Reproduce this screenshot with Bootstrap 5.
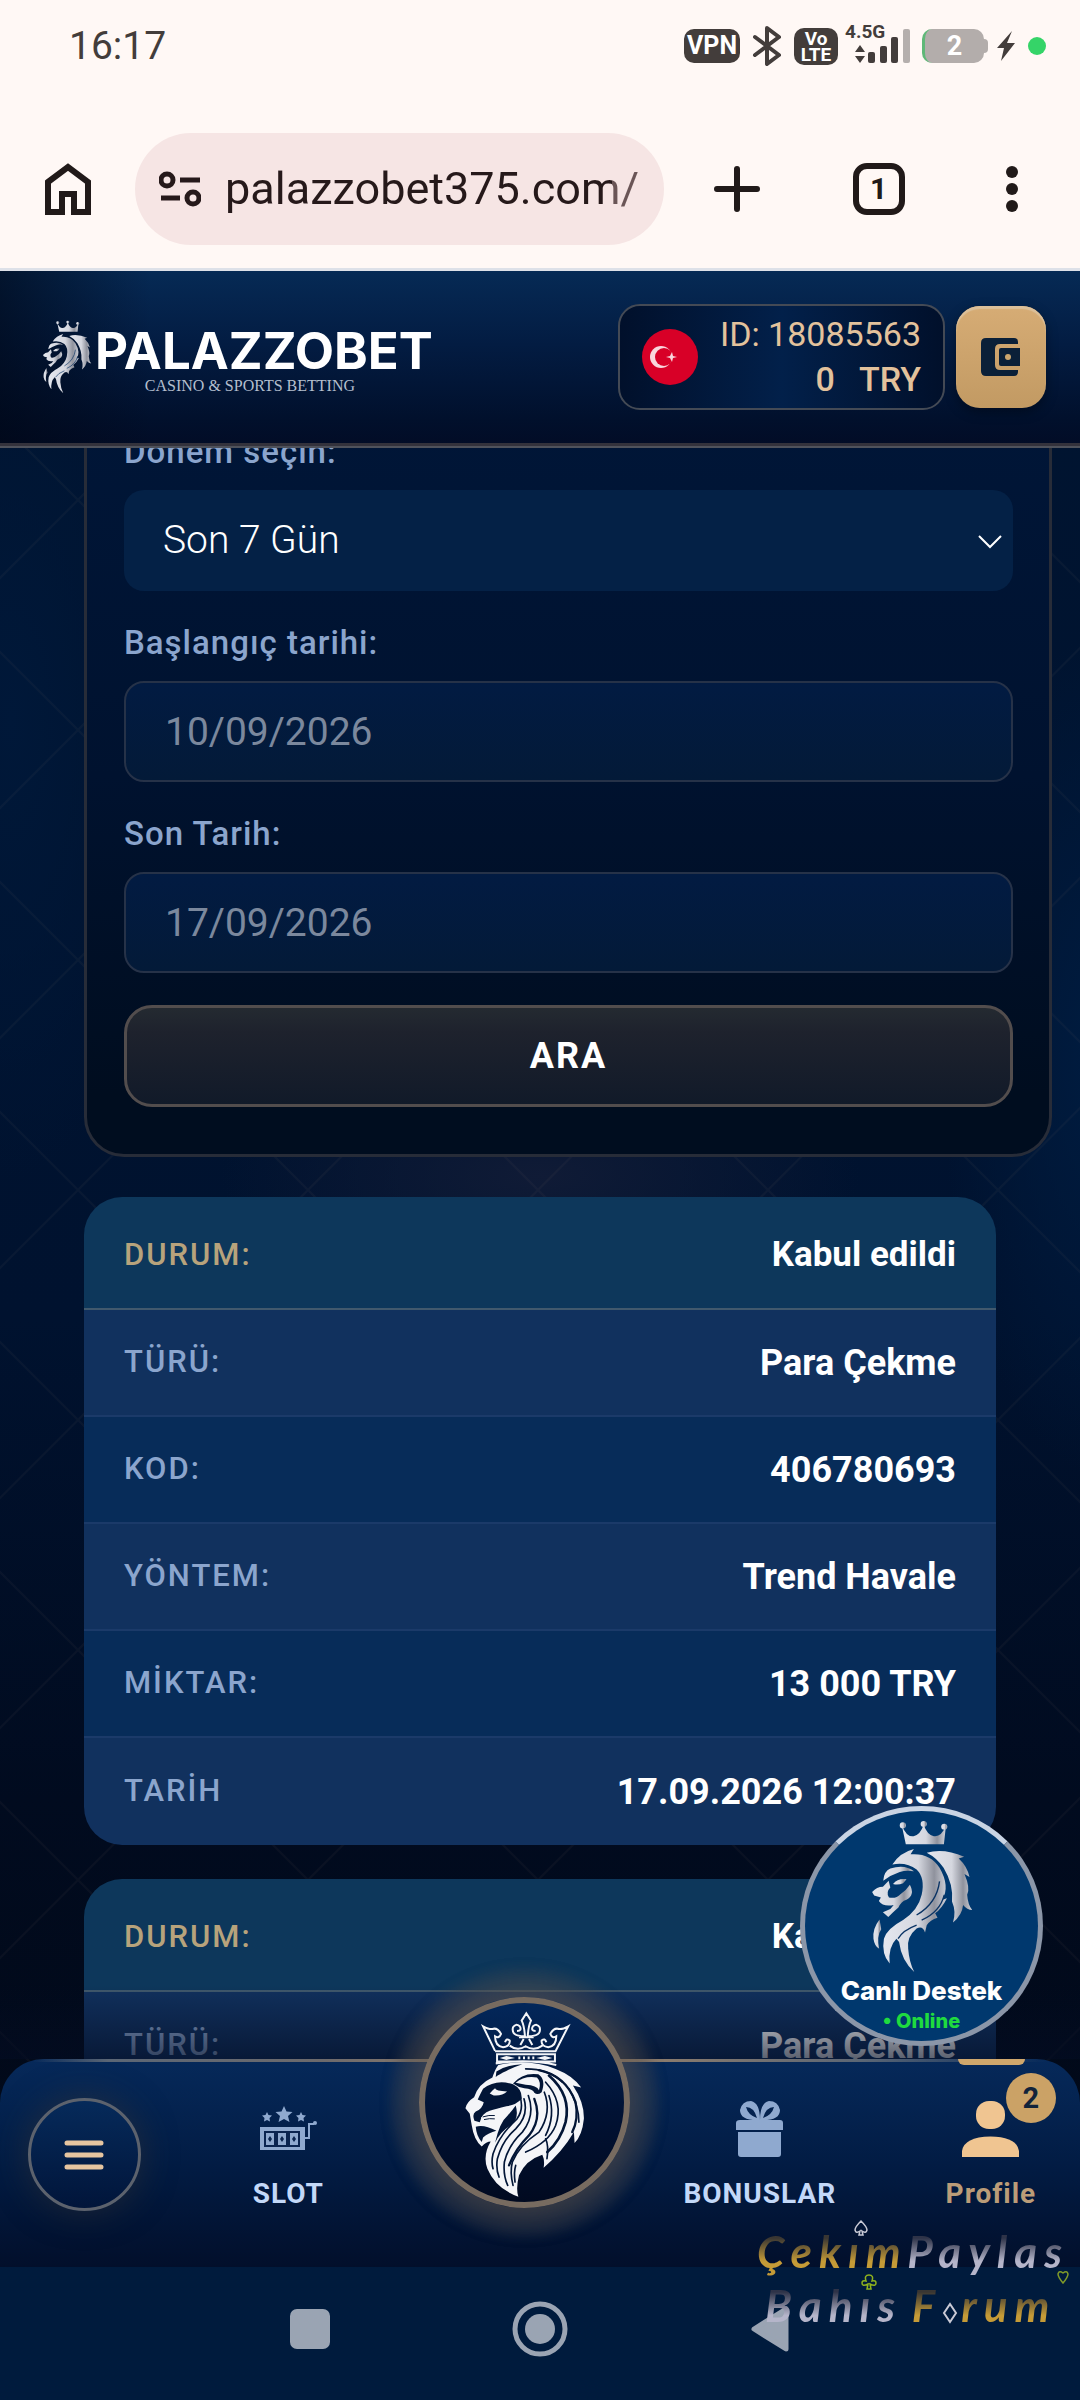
<!DOCTYPE html>
<html lang="tr">
<head>
<meta charset="utf-8">
<meta name="viewport" content="width=device-width, initial-scale=1">
<title>Palazzobet</title>
<link href="https://cdn.jsdelivr.net/npm/bootstrap@5.3.0/dist/css/bootstrap.min.css" rel="stylesheet">
<style>
:root{--gold:#e3c29c;--soft:#8ba5cd;--line:#2a303c}
body{font-family:Roboto,"Noto Sans",sans-serif;background:#000f29;color:#fff}
a{text-decoration:none}
svg{display:block;flex:none}
.app{background:
  url("data:image/svg+xml,%3csvg xmlns='http://www.w3.org/2000/svg' width='230' height='230'%3e%3cpath d='M0 0L230 230M230 0L0 230' stroke='%23807868' stroke-opacity='.07' stroke-width='2'/%3e%3c/svg%3e") 78px 40px,
  radial-gradient(ellipse 320px 120px at 50% 49%,#101b36,transparent),
  radial-gradient(ellipse 160px 420px at 102% 44%,#001c40,transparent),
  radial-gradient(ellipse 160px 460px at 1% 30%,#001839,transparent),
  linear-gradient(#001531,#00122f 55%,#010b1f 75%,#020814)}
/* device status bar */
.status{height:110px;padding:0 34px 18px 69px;background:#fff8f5;color:#433d3b}
.clock{font-size:39px;line-height:40px}
.status-icons{gap:12px}
.chip{background:#433d3b;color:#fff;border-radius:10px;font-weight:700}
.chip-vpn{width:56px;height:34px;font-size:25px;line-height:34px}
.chip-lte{width:44px;height:37px;font-size:19px;line-height:16px;padding-top:3px}
.net{font-size:19px;line-height:19px;font-weight:700;left:-5px;top:-4px}
.signal{width:60px;height:40px}
.battery{width:62px;height:34px;border-radius:10px;background:#b3adab;color:#fff;font-size:27px;line-height:34px;font-weight:700;border-left:3px solid #5fb878}
.battery::after{content:"";position:absolute;right:-4px;top:10px;width:4px;height:14px;border-radius:0 4px 4px 0;background:#b3adab}
.dot{width:18px;height:18px;background:#35d468}
/* browser bar */
.toolbar{padding:23px 61px 23px 45px;background:#fff8f5;border-bottom:3px solid #dee1e8;color:#211a19}
.toolbar button,.bare{background:none;border:0;padding:0;color:inherit}
.pill{background:#f6e5e4;height:112px;padding:0 23px 0 24px;margin-left:44px;margin-right:50px;min-width:0}
.url{font-size:45px;line-height:56px;border:0;padding:0;width:0;outline:0;color:transparent;background:linear-gradient(90deg,#26191a 93%,#6a5556 93%);-webkit-background-clip:text;background-clip:text}
.tools{width:305px}
.toolbar .tabs{width:52px;height:52px;margin-right:8px;border:6px solid #211a19;border-radius:14px;font-size:30px;line-height:40px;font-weight:700}
/* site header */
.site{height:177px;padding:0 34px 4px 42px;background:linear-gradient(90deg,rgba(0,6,20,.6),transparent 14%),linear-gradient(#062a55,#031c42 42%,#01102c 85%,#020c26);border-bottom:2px solid #4f525b;box-shadow:inset 0 -3px #33323c;z-index:3}
.brand{color:#fff;gap:3px}
.brand-text{padding-top:12px;gap:3px}
.brand-name{font-family:Inter,sans-serif;font-weight:700;font-size:51px;line-height:44px}
.brand-sub{font-family:"Liberation Serif",serif;font-size:16px;line-height:20px;color:#b4bfce;margin-right:28px}
.wallet-row{gap:11px}
.account{height:106px;border:2px solid #444a55;border-radius:22px;padding:0 22px;gap:22px;background:linear-gradient(90deg,#01102b,#02204a 50%,#01102b);color:var(--gold);font-size:34px;line-height:45px}
.balance{font-weight:500}
.wallet{width:90px;height:102px;border:0;border-radius:24px;background:linear-gradient(#d6ac75,#c29a63);box-shadow:inset 0 3px 1px #dcc09a,0 4px 12px rgba(0,0,0,.35)}
/* scrolled page */
.page{margin-bottom:-44px;min-height:0}
.filter{margin:-52px 28px 40px 84px;padding:33px 36px 47px 37px;border:3px solid #272c38;border-radius:40px;background:linear-gradient(#001638,#00122f 50%,#000d1f 92%)}
.filter label{font-size:33px;line-height:40px;font-weight:500;letter-spacing:1px;color:var(--soft);margin-bottom:18px}
.field{height:101px;border-radius:20px;margin-bottom:32px;font-size:39px}
.filter .form-select{background-color:#042146;border:0;color:#fff;font-weight:300;padding:0 60px 0 39px;background-position:right 8px center;background-size:30px;
  --bs-form-select-bg-img:url("data:image/svg+xml,%3csvg xmlns='http://www.w3.org/2000/svg' viewBox='0 0 30 30'%3e%3cpath d='M4 10l11 11L26 10' fill='none' stroke='%23fff' stroke-width='2'/%3e%3c/svg%3e")}
.filter .form-control{background:linear-gradient(#021b42,#031a38);border:2px solid #263248;color:#7b889d;padding:0 39px}
.search{height:102px;border:3px solid #524d4d;border-radius:28px;background:linear-gradient(#242a31,#1e222d 25%,#111a29);color:#fff;font-size:36px;font-weight:700;letter-spacing:2px}
.record{margin:0 84px 34px;border-radius:38px;overflow:hidden}
.record th{font-size:31px;font-weight:500;letter-spacing:2px;color:var(--soft);padding:0 0 0 40px}
.record td{font-size:36px;font-weight:700;text-align:right;padding:0 40px 0 0}
.record tr{height:107px;background:#072c59;border-bottom:2px solid #1b3a69}
.record tr:nth-child(even){background:#11315e}
.record tr:last-child{height:108px;border-bottom:0}
.record tr:first-child{height:112px;background:#0d375b;border-bottom-color:#41596d}
.record tr:first-child th{color:#b7a37c;padding-top:6px}
.record tr:first-child td{font-size:35px;padding-top:6px}
/* bottom navigation */
.dock{height:208px;border-radius:44px 44px 0 0;background:linear-gradient(#06295a,#021c44 50%,#020f2b);z-index:4}
.edge{left:0;right:0;top:0;height:3px;background:linear-gradient(90deg,transparent 3%,#5b6675 10%,#6d6a6c 30%,#937f6c 45%,#937f6c 58%,#5b6675 80%,transparent 97%)}
.fade-up{bottom:208px;left:0;right:0;height:74px;background:linear-gradient(transparent,rgba(3,12,34,.65));z-index:-1}
.dock-item{font-size:28px;line-height:34px;font-weight:700;letter-spacing:1px;color:#c3d8f8;gap:20px;padding-top:42px}
.slot-menu{width:15.6%;padding-top:39px}
.slot-a{width:22.2%}
.slot-b{width:26.3%}
.slot-c{width:16.5%}
.dock .active-item{color:#bb9c78}
.menu-btn{width:113px;height:113px;border:3px solid #5c626d;background:linear-gradient(#062a5a,#01153a);box-shadow:0 0 34px rgba(60,55,50,.5)}
.lion-btn{width:211px;height:211px;top:-62px;left:50%;margin-left:-121px;padding-top:4px;border:6px solid #776b60;background:linear-gradient(#03275a,#011234 55%,#010a20);box-shadow:0 0 26px 12px rgba(115,95,75,.4),0 0 12px 28px rgba(60,65,75,.3)}
.marker{width:67px;height:6px;top:0;left:50%;margin-left:-33px;border-radius:0 0 8px 8px;background:#d0a76c}
.count{width:50px;height:50px;left:50%;margin-left:15px;top:14px;background:#cba266;color:#12233a;font-size:29px;line-height:50px;letter-spacing:0}
.chat{width:243px;height:240px;right:37px;bottom:354px;z-index:5;border:5px solid #8b96a8;border-top-color:#c9d4e4;background:#00386e;padding-top:9px;color:#fff;font-family:Inter,sans-serif;font-weight:800}
.chat-name{font-size:26px;line-height:36px}
.chat-state{font-size:20px;line-height:24px;color:#1fdb3f}
/* device navigation */
.keys{height:133px;padding:0 18% 9px;background:#001b3d;z-index:4;color:#9aa4b3}
.keys .bare{color:inherit}
.stamp{left:757px;bottom:68px;z-index:6;font-family:Lato,sans-serif;font-style:italic;font-weight:700;font-size:44px;line-height:54px;pointer-events:none}
.ink{background:linear-gradient(#393633 25%,#c59b37 70%);-webkit-background-clip:text;background-clip:text;color:transparent;letter-spacing:7px}
.silver{background-image:linear-gradient(#2e3348 25%,#b5b5ca 70%)}
.suit{position:absolute;fill:none;stroke-width:1.500}
.suit-spade{left:97px;top:-4px;stroke:#c9cad6}
.suit-heart{left:300px;top:46px;stroke:#7f9a2a}
.suit-club{left:104px;top:50px;stroke:#8fb31e}
.gem{display:inline-block;fill:none;stroke:#c9cad6;stroke-width:2;margin-right:3px;vertical-align:-2px}
</style>
</head>
<body>
<svg width="0" height="0" class="position-absolute" aria-hidden="true">
  <defs>
    <linearGradient id="steel" x1="0" x2="1"><stop offset="0" stop-color="#e4e7ef"/><stop offset=".55" stop-color="#d5d7df"/><stop offset=".8" stop-color="#8f929d"/><stop offset="1" stop-color="#d0d2da"/></linearGradient>
    <symbol id="lion" viewBox="392 248 308 454">
      <g fill="url(#steel)">
        <path d="M498 320L486 264Q501 300 521 296Q541 292 551 262Q561 292 581 296Q602 300 617 266L611 320Z"/>
        <circle cx="489" cy="264" r="9"/><circle cx="551" cy="260" r="9"/><circle cx="612" cy="268" r="9"/>
        <path d="M560 345Q610 330 671 357L655 362Q680 385 687 417L672 408Q690 450 680 470Q682 500 695 515Q680 515 668 500Q665 530 638 552Q648 520 635 490Q640 440 610 390Q590 360 560 345Z"/>
        <path d="M458 380Q480 345 522 334L512 350Q570 345 598 390Q630 445 606 485L620 480Q605 510 585 525L592 538Q570 545 560 560L555 582Q548 560 530 570Q500 595 505 630Q508 670 523 699Q485 665 478 610L470 600Q445 625 450 674Q425 645 433 600Q443 570 490 545Q535 515 545 470Q556 420 530 395Q500 372 458 380Z"/>
        <path d="M431 428Q433 400 452 392Q495 378 522 400Q500 396 480 402Q455 410 431 428Z"/>
        <path d="M460 438Q475 420 500 424L490 436Q475 442 460 438Z"/>
        <path d="M398 462Q412 446 430 446L447 428L452 448Q438 462 448 478Q470 482 482 468Q500 456 510 440Q526 470 500 485Q484 490 476 508Q462 520 446 536L430 522L452 512L462 500Q430 506 418 488L424 478L404 472Z"/>
        <path d="M420 543Q399 570 402 600Q405 622 419 630Q411 592 425 572Z"/>
      </g>
      <path d="M530 530Q590 495 598 430M545 545Q600 520 612 470M475 600Q490 575 530 560" fill="none" stroke="#0a3364" stroke-width="4"/>
    </symbol>
  </defs>
</svg>

<div class="app d-flex flex-column vh-100 overflow-hidden position-relative">

  <div class="status d-flex align-items-center justify-content-between flex-shrink-0">
    <span class="clock">16:17</span>
    <div class="status-icons d-flex align-items-center">
      <span class="chip chip-vpn text-center">VPN</span>
      <svg width="30" height="42" viewBox="0 0 30 42" fill="none" stroke="#433d3b" stroke-width="4" stroke-linejoin="round" stroke-linecap="round"><path d="M3 12L27 30L15 39V3L27 12L3 30"/></svg>
      <span class="chip chip-lte text-center">Vo<br>LTE</span>
      <span class="signal position-relative">
        <span class="net position-absolute">4.5G</span>
        <svg width="60" height="40" viewBox="0 0 60 40" fill="#433d3b"><path d="M5 26l5-7 5 7zM5 30h10l-5 7z"/><rect x="18" y="26" width="7" height="11" rx="2"/><rect x="30" y="20" width="7" height="17" rx="2"/><rect x="41" y="11" width="7" height="26" rx="2"/><rect x="53" y="3" width="7" height="34" rx="2" fill="#b5afad"/></svg>
      </span>
      <span class="battery position-relative text-center">2</span>
      <svg width="20" height="32" viewBox="0 0 20 32" fill="#433d3b"><path d="M16 1L1 18h7L5 31L19 13h-8z"/></svg>
      <span class="dot rounded-circle"></span>
    </div>
  </div>

  <div class="toolbar d-flex align-items-center flex-shrink-0">
    <button type="button" aria-label="Ana sayfa"><svg width="46" height="52" viewBox="0 0 46 52" fill="none" stroke="currentColor" stroke-width="6"><path d="M3 19L23 4L43 19V49H29V31H17V49H3Z"/></svg></button>
    <div class="pill rounded-pill d-flex align-items-center flex-grow-1">
      <svg width="42" height="36" viewBox="0 0 42 36" fill="none" stroke="#26191a" stroke-width="5"><circle cx="8" cy="9" r="6"/><path d="M21 9H41M2 27H21"/><circle cx="34" cy="27" r="6"/></svg>
      <input class="url flex-grow-1 ms-4" type="text" aria-label="Adres" value="palazzobet375.com/a">
    </div>
    <div class="tools d-flex align-items-center justify-content-between flex-shrink-0">
      <button type="button" aria-label="Yeni sekme"><svg width="46" height="46" viewBox="0 0 46 46" stroke="currentColor" stroke-width="6" stroke-linecap="round"><path d="M23 3V43M3 23H43"/></svg></button>
      <button type="button" class="tabs">1</button>
      <button type="button" aria-label="Menü"><svg width="14" height="48" viewBox="0 0 14 48" fill="currentColor"><circle cx="7" cy="7" r="6"/><circle cx="7" cy="24" r="6"/><circle cx="7" cy="41" r="6"/></svg></button>
    </div>
  </div>

  <header class="site d-flex align-items-center justify-content-between position-relative flex-shrink-0">
    <a href="#" class="brand d-flex align-items-center">
      <svg width="50" height="74"><use href="#lion"/></svg>
      <span class="brand-text d-flex flex-column align-items-center"><span class="brand-name">PALAZZOBET</span><span class="brand-sub">CASINO &amp; SPORTS BETTING</span></span>
    </a>
    <div class="wallet-row d-flex align-items-center">
      <div class="account d-flex align-items-center">
        <svg width="56" height="56" viewBox="0 0 56 56"><circle cx="28" cy="28" r="28" fill="#d80027"/><circle cx="19" cy="28" r="11" fill="#f9d5dc"/><circle cx="22" cy="28" r="9" fill="#d80027"/><path d="M24 28l4-1 2-4 1 4 4 1-4 1-1 4-2-4z" fill="#f9d5dc"/></svg>
        <div class="text-end"><div>ID: 18085563</div><div class="balance"><span class="me-4">0</span>TRY</div></div>
      </div>
      <button type="button" class="wallet d-flex align-items-center justify-content-center" aria-label="Cüzdan">
        <svg width="40" height="38" viewBox="0 0 40 38"><path d="M5 0H33Q37 0 37 4V6H19Q14 6 14 11V27Q14 32 19 32H37V34Q37 38 33 38H5Q0 38 0 33V5Q0 0 5 0Z" fill="#0b2038"/><path d="M20 10H39V28H20Q18 28 18 26V12Q18 10 20 10Z" fill="#0b2038"/><circle cx="27" cy="19" r="3" fill="#cba56d"/></svg>
      </button>
    </div>
  </header>

  <main class="page flex-grow-1 overflow-hidden">
    <form class="filter">
      <label class="d-block" for="period">Dönem seçin:</label>
      <select class="form-select field" id="period"><option>Son 7 Gün</option></select>
      <label class="d-block" for="from">Başlangıç tarihi:</label>
      <input class="form-control field" id="from" type="text" value="10/09/2026">
      <label class="d-block" for="to">Son Tarih:</label>
      <input class="form-control field" id="to" type="text" value="17/09/2026">
      <button type="button" class="search w-100 d-block">ARA</button>
    </form>
    <div class="record">
      <table class="w-100">
        <tr><th scope="row">DURUM:</th><td>Kabul edildi</td></tr>
        <tr><th scope="row">TÜRÜ:</th><td>Para Çekme</td></tr>
        <tr><th scope="row">KOD:</th><td>406780693</td></tr>
        <tr><th scope="row">YÖNTEM:</th><td>Trend Havale</td></tr>
        <tr><th scope="row">MİKTAR:</th><td>13 000 TRY</td></tr>
        <tr><th scope="row">TARİH</th><td>17.09.2026 12:00:37</td></tr>
      </table>
    </div>
    <div class="record">
      <table class="w-100">
        <tr><th scope="row">DURUM:</th><td>Kabul edildi</td></tr>
        <tr><th scope="row">TÜRÜ:</th><td>Para Çekme</td></tr>
      </table>
    </div>
  </main>

  <button type="button" class="chat position-absolute rounded-circle d-flex flex-column align-items-center">
    <svg width="104" height="153"><use href="#lion"/></svg>
    <span class="chat-name">Canlı Destek</span>
    <span class="chat-state">• Online</span>
  </button>

  <nav class="dock position-relative d-flex flex-shrink-0">
    <div class="fade-up position-absolute"></div>
    <div class="edge position-absolute"></div>
    <div class="slot-menu d-flex align-items-start justify-content-center">
      <button type="button" class="menu-btn rounded-circle d-flex align-items-center justify-content-center p-0" aria-label="Menü"><svg width="40" height="30" viewBox="0 0 40 30" stroke="#e6c5a0" stroke-width="5" stroke-linecap="round"><path d="M3 3H37M3 15H37M3 27H37"/></svg></button>
    </div>
    <a href="#" class="dock-item slot-a d-flex flex-column align-items-center">
      <svg width="57" height="56" viewBox="0 0 57 56" fill="#8fa9cf"><path d="M24 5l2.500 5.500 6 .5-4.500 4 1.500 6-5.500-3-5.500 3 1.500-6-4.500-4 6-.5zM7 11l1.500 3 3.500.5-2.500 2.500.5 3.500-3-1.500-3 1.500.5-3.500-2.500-2.500 3.500-.5zM41 11l1.500 3 3.500.5-2.500 2.500.5 3.500-3-1.500-3 1.500.5-3.500-2.500-2.500 3.500-.5z"/><path d="M0 26H45V49H0Z"/><path d="M45 37h4v-14h5" fill="none" stroke="#8fa9cf" stroke-width="2"/><circle cx="55" cy="22" r="2"/><g fill="none" stroke="#0a2450" stroke-width="2"><path d="M5 31h10v14H5zM17 31h10v14H17zM29 31h10v14H29z"/></g><path d="M10 35l2 3-2 3-2-3zM22 35l2 3-2 3-2-3zM34 35l2 3-2 3-2-3z" fill="#0a2450"/></svg>
      SLOT
    </a>
    <a href="#" class="lion-btn position-absolute rounded-circle d-flex align-items-center justify-content-center" aria-label="Ana sayfa">
      <svg width="124" height="187" viewBox="242 156 372 562">
        <g fill="none" stroke="#f4f5f8" stroke-width="6">
          <path d="M338 276L302 202Q322 212 330 210Q345 205 356 225Q350 240 338 232Q338 262 362 265Q384 262 382 245Q372 236 368 250M520 276L558 202Q540 212 530 210Q515 205 504 225Q510 240 522 232Q522 262 498 265Q476 262 478 245Q488 236 492 250M382 260Q405 278 430 262Q455 278 480 260"/>
          <path d="M432 163L418 185Q426 200 428 235H436Q438 200 446 185ZM426 232Q385 232 392 205Q400 192 412 202Q420 215 404 216M438 232Q479 232 472 205Q464 192 452 202Q444 215 460 216M410 235H454M424 240L414 258M440 240L450 258"/>
          <path d="M338 277H522M344 286H518V308H344ZM340 314Q430 298 522 318"/>
        </g>
        <path d="M352 297l20-6 26 6-26 6zM462 297l26-6 22 6-22 6zM408 293h6v8h-6zM422 293h6v8h-6zM436 293h6v8h-6zM450 293h6v8h-6z" fill="#f4f5f8"/>
        <path d="M330 356Q338 330 348 318Q440 298 520 330Q572 350 597 386L572 380Q606 430 605 480Q600 530 577 553L575 520Q540 580 484 627Q488 604 480 588Q430 604 410 650Q400 690 408 714Q340 690 315 630Q300 590 325 548Q312 548 298 563Q275 545 268 500L262 465L249 448Q252 430 275 415Q288 375 330 356Z" fill="#f4f5f8"/>
        <g fill="#021536">
          <path d="M302 390Q340 360 392 376Q420 390 418 420Q400 440 372 442Q340 450 322 456Q300 462 292 490L276 486Q268 466 280 458Q300 450 304 430L286 422Q294 405 302 390Z"/>
          <path d="M280 504Q304 496 342 516Q318 522 302 536L298 550Q282 532 280 504Z"/>
          <path d="M392 374Q420 340 468 346Q492 362 478 400Q466 410 456 402Q452 390 426 388Q408 386 392 374Z"/>
          <path d="M400 440Q412 480 384 500Q352 520 338 552Q352 490 376 470Q392 452 400 440Z"/>
          <path d="M342 338Q370 318 420 316Q390 326 372 336Q350 346 340 354Z"/>
        </g>
        <path d="M400 372Q425 350 464 356Q478 370 470 394Q464 380 430 378Z" fill="#f4f5f8"/>
        <path d="M322 404Q332 392 338 388Q340 396 374 398Q360 412 334 410ZM296 476Q316 458 344 462L340 484Q320 492 300 486Z" fill="#f4f5f8"/>
        <g fill="none" stroke="#021536" stroke-width="5" stroke-linecap="round">
          <path d="M302 474Q320 468 336 470M306 482Q322 478 336 480" stroke-width="3"/>
          <path d="M425 420Q440 470 400 510Q360 545 345 600Q340 630 350 655"/>
          <path d="M438 410Q460 470 420 520Q378 560 366 610Q362 650 376 680"/>
          <path d="M412 410Q426 450 404 480Q350 530 332 585Q326 610 332 630"/>
          <path d="M486 400Q510 460 470 520Q410 560 390 610Q382 640 392 680"/>
          <path d="M456 420Q480 480 440 530Q400 570 380 620" stroke-width="7"/>
          <path d="M490 370Q545 430 520 500Q500 550 430 580"/>
          <path d="M500 350Q568 410 550 490Q535 545 495 580" stroke-width="8"/>
          <path d="M470 334Q550 350 580 430Q590 480 570 520" stroke-width="7"/>
          <path d="M430 330Q500 330 540 370M560 390Q590 440 590 490M500 410Q520 470 490 530"/>
          <path d="M490 540Q500 560 494 600M400 620Q394 640 398 670"/>
        </g>
      </svg>
    </a>
    <a href="#" class="dock-item slot-b d-flex flex-column align-items-center ms-auto">
      <svg width="48" height="56" viewBox="0 0 48 56" fill="#8fa9cf"><path fill-rule="evenodd" d="M24 19Q4 20 4 9Q6 0 15 0Q24 2 24 19Q24 2 33 0Q42 0 44 9Q44 20 24 19ZM21 17Q18 6 10 6Q12 14 21 17ZM27 17Q30 6 38 6Q36 14 27 17Z"/><path d="M4 19H44Q47 19 47 22V29H0V22Q0 19 4 19ZM2 31H45V53Q45 56 42 56H5Q2 56 2 53Z"/></svg>
      BONUSLAR
    </a>
    <a href="#" class="dock-item active-item slot-c d-flex flex-column align-items-center position-relative">
      <span class="marker position-absolute"></span>
      <svg width="57" height="56" viewBox="0 0 57 56" fill="#f0c591"><rect x="14" y="0" width="29" height="28" rx="13"/><path d="M0 56V50Q2 36 28.500 35.500Q55 36 57 50V56Z"/></svg>
      Profile
      <span class="count position-absolute rounded-circle text-center">2</span>
    </a>
  </nav>

  <div class="keys row g-0 align-items-center flex-shrink-0">
    <button type="button" class="bare col d-flex justify-content-center" aria-label="Son uygulamalar"><svg width="40" height="40"><rect width="40" height="40" rx="7" fill="currentColor"/></svg></button>
    <button type="button" class="bare col d-flex justify-content-center" aria-label="Ana ekran"><svg width="56" height="56" viewBox="0 0 56 56"><circle cx="28" cy="28" r="25" fill="none" stroke="currentColor" stroke-width="5"/><circle cx="28" cy="28" r="15" fill="currentColor"/></svg></button>
    <button type="button" class="bare col d-flex justify-content-center" aria-label="Geri"><svg width="38" height="46" viewBox="0 0 38 46"><path d="M3 23L35 3V43Z" fill="currentColor" stroke="currentColor" stroke-width="5" stroke-linejoin="round"/></svg></button>
  </div>

  <div class="stamp position-absolute text-nowrap">
    <svg class="suit suit-spade" width="14" height="16" viewBox="0 0 14 16"><path d="M7 1Q1 7 1 10Q2 14 6 11L5 15H9L8 11Q12 14 13 10Q13 7 7 1Z"/></svg>
    <svg class="suit suit-heart" width="12" height="14" viewBox="0 0 12 14"><path d="M6 13Q1 7 1 4Q2 0 6 3Q10 0 11 4Q11 7 6 13Z"/></svg>
    <svg class="suit suit-club" width="16" height="16" viewBox="0 0 16 16"><path d="M7 10Q1 13 1 9Q1 6 5 7Q3 1 8 1Q13 1 11 7Q15 6 15 9Q15 13 9 10L10 15H6Z"/></svg>
    <div><span class="ink">Çekım</span><span class="ink silver">Paylas</span></div>
    <div class="ms-2"><span class="ink silver">Bahıs</span> <span class="ink">F</span><svg class="gem" width="16" height="22" viewBox="0 0 16 22"><path d="M8 2L14 11L8 20L2 11Z"/></svg><span class="ink">rum</span></div>
  </div>
</div>
<script src="https://cdn.jsdelivr.net/npm/bootstrap@5.3.0/dist/js/bootstrap.bundle.min.js"></script>
</body>
</html>
